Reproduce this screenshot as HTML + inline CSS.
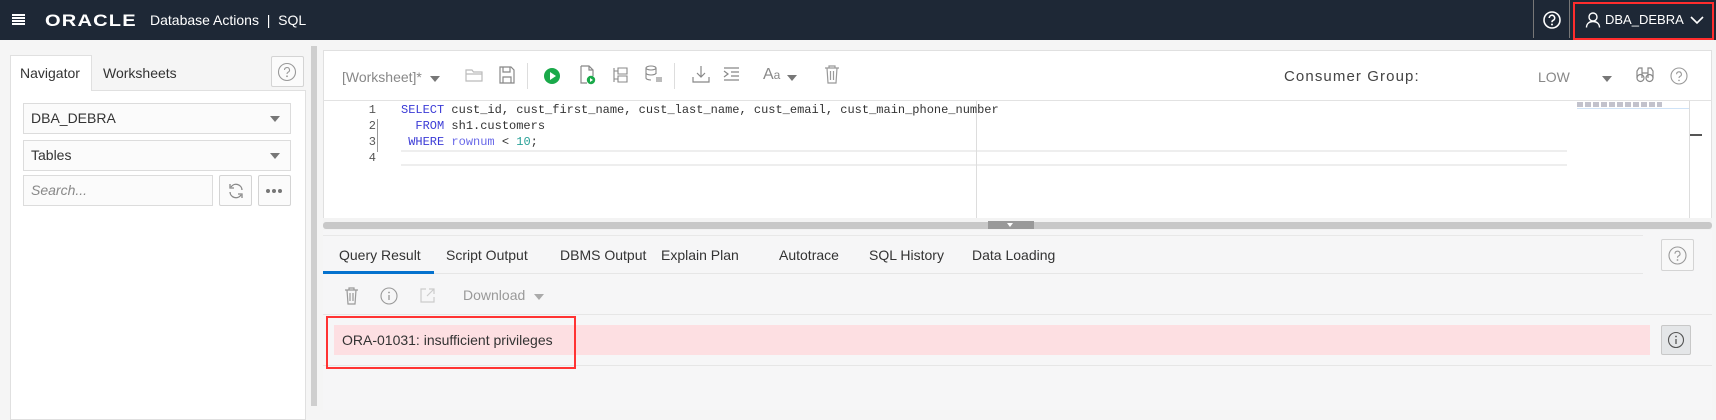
<!DOCTYPE html>
<html><head><meta charset="utf-8"><style>
*{box-sizing:border-box;margin:0;padding:0}
body{width:1716px;height:401px;overflow:hidden;background:#f5f5f5;font-family:"Liberation Sans",sans-serif;font-size:14px;color:#333;position:relative}
.a{position:absolute}
.hdr{left:0;top:0;width:1716px;height:40px;background:#1e2836;color:#fff}
.btn{position:absolute;border:1px solid #d4d4d4;background:#fbfbfb;border-radius:2px}
.sel{position:absolute;border:1px solid #dcdcdc;background:#fbfbfb;padding:0 0 0 7px;line-height:29px;font-size:14px;color:#333}
.caret{position:absolute;width:0;height:0;border-left:5px solid transparent;border-right:5px solid transparent;border-top:6px solid #777}
.code{font-family:"Liberation Mono",monospace;font-size:12px;white-space:pre;position:absolute;left:401px;line-height:16px;color:#333}
.ln{font-family:"Liberation Mono",monospace;font-size:12px;position:absolute;left:364px;color:#555;width:12px;text-align:right;line-height:16px}
.kw{color:#3b3bd6}.id{color:#6868e8}.nm{color:#2aa198}
.tab{position:absolute;top:247px;font-size:14px;color:#333}
</style></head><body>
<div class="a hdr">
 <div class="a" style="left:12px;top:14px;width:13px;height:1.5px;background:#fff;box-shadow:0 3px 0 #fff,0 6px 0 #fff,0 9px 0 #fff"></div>
 <div class="a" style="left:45px;top:11px;font-size:17px;font-weight:bold;letter-spacing:1px;transform:scaleX(1.18);transform-origin:left">ORACLE</div>
 <div class="a" style="left:150px;top:12px;font-size:14px">Database Actions &nbsp;| &nbsp;SQL</div>
 <div class="a" style="left:1533px;top:0;width:1px;height:38px;background:#777"></div>
 <svg class="a" style="left:1542px;top:10px" width="20" height="20"><circle cx="10" cy="10" r="8" fill="none" stroke="#fff" stroke-width="1.6"/><path d="M7.3 8a2.7 2.7 0 1 1 3.8 2.4c-.8.4-1.1.9-1.1 1.8" fill="none" stroke="#fff" stroke-width="1.6"/><circle cx="10" cy="14.5" r="1" fill="#fff"/></svg>
 <div class="a" style="left:1569px;top:0;width:1px;height:38px;background:#777"></div>
 <div class="a" style="left:1573px;top:2px;width:141px;height:38px;border:2px solid #ff2d2d"></div>
 <svg class="a" style="left:1585px;top:11px" width="16" height="18"><circle cx="8" cy="6" r="4" fill="none" stroke="#fff" stroke-width="1.4"/><path d="M1.5 16.5c0-4 3-6 6.5-6s6.5 2 6.5 6" fill="none" stroke="#fff" stroke-width="1.4"/></svg>
 <div class="a" style="left:1605px;top:12px;font-size:13px">DBA_DEBRA</div>
 <svg class="a" style="left:1690px;top:15px" width="14" height="10"><path d="M1 2l6 6 6-6" fill="none" stroke="#fff" stroke-width="1.6"/></svg>
</div>

<div class="a" style="left:10px;top:90px;width:296px;height:330px;background:#fff;border:1px solid #e0e0e0"></div>
<div class="a" style="left:10px;top:55px;width:82px;height:36px;background:#fff;border:1px solid #e0e0e0;border-bottom:none"></div>
<div class="a" style="left:20px;top:65px;font-size:14px">Navigator</div>
<div class="a" style="left:103px;top:65px;font-size:14px">Worksheets</div>
<div class="btn" style="left:271px;top:56px;width:33px;height:31px"></div>
<svg class="a" style="left:277px;top:62px" width="20" height="20"><circle cx="10" cy="10" r="8.5" fill="none" stroke="#999" stroke-width="1.1"/><path d="M7.5 8a2.5 2.5 0 1 1 3.5 2.3c-.7.4-1 .8-1 1.7" fill="none" stroke="#999" stroke-width="1.1"/><circle cx="10" cy="14.3" r=".9" fill="#999"/></svg>
<div class="sel" style="left:23px;top:103px;width:268px;height:31px">DBA_DEBRA</div><div class="caret" style="left:270px;top:116px"></div>
<div class="sel" style="left:23px;top:140px;width:268px;height:31px">Tables</div><div class="caret" style="left:270px;top:153px"></div>
<div class="sel" style="left:23px;top:175px;width:190px;height:31px;color:#888;font-style:italic">Search...</div>
<div class="btn" style="left:219px;top:175px;width:33px;height:31px"></div>
<svg class="a" style="left:227px;top:182px" width="18" height="18"><path d="M15 8A6 6 0 0 0 4 5M3 10a6 6 0 0 0 11 3" fill="none" stroke="#888" stroke-width="1.3"/><path d="M3 2v4h4M15 16v-4h-4" fill="none" stroke="#888" stroke-width="1.3"/></svg>
<div class="btn" style="left:258px;top:175px;width:33px;height:31px"></div>
<div class="a" style="left:266px;top:189px;width:4px;height:4px;border-radius:2px;background:#777;box-shadow:6px 0 0 #777,12px 0 0 #777"></div>
<div class="a" style="left:311px;top:46px;width:6px;height:360px;background:#cfcfcf"></div>

<div class="a" style="left:323px;top:50px;width:1389px;height:360px;background:#fff;border:1px solid #e0e0e0"></div>
<div class="a" style="left:323px;top:100px;width:1389px;height:1px;background:#e2e2e2"></div>
<div class="a" style="left:342px;top:69px;font-size:14px;color:#888">[Worksheet]*</div><div class="caret" style="left:430px;top:76px"></div>
<svg class="a" style="left:465px;top:67px" width="18" height="16"><path d="M1 3h6l1.5 2H17v9H1z M1 7h16" fill="none" stroke="#bbb" stroke-width="1.2"/></svg>
<svg class="a" style="left:499px;top:66px" width="16" height="18"><path d="M1 1h11l3 3v13H1z M4 1v5h7V1 M4 17v-6h8v6" fill="none" stroke="#888" stroke-width="1.2"/></svg>
<div class="a" style="left:527px;top:63px;width:1px;height:26px;background:#ddd"></div>
<svg class="a" style="left:543px;top:67px" width="18" height="18"><circle cx="9" cy="9" r="8" fill="#1aa94a"/><path d="M7 5l6 4-6 4z" fill="#fff"/></svg>
<svg class="a" style="left:580px;top:65px" width="16" height="20"><path d="M1 1h8l4 4v6 M1 1v17h6 M9 1v4h4" fill="none" stroke="#888" stroke-width="1.2"/><circle cx="11" cy="15" r="4.2" fill="#1aa94a"/><path d="M10 13l3 2-3 2z" fill="#fff"/></svg>
<svg class="a" style="left:612px;top:67px" width="16" height="16"><path d="M2 1v14 M2 4h4 M2 12h4 M6 1h9v6H6z M6 9h9v6H6z" fill="none" stroke="#888" stroke-width="1.1"/></svg>
<svg class="a" style="left:645px;top:65px" width="18" height="18"><ellipse cx="6" cy="3" rx="5" ry="2" fill="none" stroke="#888" stroke-width="1.1"/><path d="M1 3v10c0 1 2 2 5 2 M11 3v6 M1 8c0 1 2 2 5 2s5-1 5-2" fill="none" stroke="#888" stroke-width="1.1"/><rect x="11" y="12" width="6" height="5" fill="#bbb"/></svg>
<div class="a" style="left:674px;top:63px;width:1px;height:26px;background:#ddd"></div>
<svg class="a" style="left:692px;top:65px" width="18" height="18"><path d="M9 1v11 M5 8l4 4 4-4 M1 12v5h16v-5" fill="none" stroke="#888" stroke-width="1.2"/></svg>
<svg class="a" style="left:723px;top:67px" width="17" height="15"><path d="M1 1h15 M8 5h8 M8 9h8 M1 13h15 M1 4l4 3-4 3" fill="none" stroke="#888" stroke-width="1.2"/></svg>
<div class="a" style="left:763px;top:66px;font-size:16px;color:#888">A<span style="font-size:12px">a</span></div><div class="caret" style="left:787px;top:75px"></div>
<svg class="a" style="left:824px;top:64px" width="16" height="20"><path d="M1 4h14 M5 4V2h6v2 M3 4l1 15h8l1-15 M6.5 7v9 M9.5 7v9" fill="none" stroke="#999" stroke-width="1.2"/></svg>
<div class="a" style="left:1284px;top:68px;font-size:15px;letter-spacing:1.1px;color:#444">Consumer Group:</div>
<div class="a" style="left:1538px;top:69px;font-size:14px;color:#888">LOW</div><div class="caret" style="left:1602px;top:76px"></div>
<svg class="a" style="left:1636px;top:67px" width="18" height="16"><circle cx="4.5" cy="11" r="3.5" fill="none" stroke="#888" stroke-width="1.2"/><circle cx="13.5" cy="11" r="3.5" fill="none" stroke="#888" stroke-width="1.2"/><path d="M1 11V4l2-3h3v10 M17 11V4l-2-3h-3v10 M6 6h6" fill="none" stroke="#888" stroke-width="1.2"/></svg>
<svg class="a" style="left:1670px;top:67px" width="18" height="18"><circle cx="9" cy="9" r="8" fill="none" stroke="#999" stroke-width="1.1"/><path d="M6.6 7.2a2.4 2.4 0 1 1 3.4 2.2c-.7.4-1 .8-1 1.6" fill="none" stroke="#999" stroke-width="1.1"/><circle cx="9" cy="13.4" r=".8" fill="#999"/></svg>

<div class="a" style="left:377px;top:119px;width:1px;height:33px;background:#999"></div>
<div class="a" style="left:401px;top:150px;width:1166px;height:16px;border-top:2px solid #eee;border-bottom:2px solid #eee"></div>
<div class="a" style="left:976px;top:101px;width:1px;height:117px;background:#ddd"></div>
<div class="ln" style="top:102px">1</div><div class="ln" style="top:118px">2</div><div class="ln" style="top:134px">3</div><div class="ln" style="top:150px">4</div>
<div class="code" style="top:102px"><span class="kw">SELECT</span> cust_id, cust_first_name, cust_last_name, cust_email, cust_main_phone_number</div>
<div class="code" style="top:118px">  <span class="kw">FROM</span> sh1.customers</div>
<div class="code" style="top:134px"> <span class="kw">WHERE</span> <span class="id">rownum</span> &lt; <span class="nm">10</span>;</div>
<div class="a" style="left:1577px;top:102px;width:85px;height:5px;background:repeating-linear-gradient(90deg,#99a 0 6px,#fff 6px 8px);opacity:.6"></div>
<div class="a" style="left:1577px;top:108px;width:112px;height:1px;background:#cfe3f7"></div>
<div class="a" style="left:1689px;top:101px;width:1px;height:117px;background:#ddd"></div>
<div class="a" style="left:1690px;top:134px;width:12px;height:2px;background:#555"></div>
<div class="a" style="left:323px;top:218px;width:1389px;height:12px;background:#f3f3f3"></div>
<div class="a" style="left:323px;top:222px;width:1389px;height:7px;background:#c8c8c8;border-radius:3px"></div>
<div class="a" style="left:988px;top:221px;width:46px;height:8px;background:#999"></div>
<div class="a" style="left:1007px;top:223px;width:0;height:0;border-left:3px solid transparent;border-right:3px solid transparent;border-top:4px solid #fff"></div>

<div class="a" style="left:323px;top:230px;width:1389px;height:180px;background:#f6f6f7"></div>
<div class="a" style="left:323px;top:235px;width:1320px;height:1px;background:#e8e8e8"></div>
<div class="tab" style="left:339px">Query Result</div>
<div class="tab" style="left:446px">Script Output</div>
<div class="tab" style="left:560px">DBMS Output</div>
<div class="tab" style="left:661px">Explain Plan</div>
<div class="tab" style="left:779px">Autotrace</div>
<div class="tab" style="left:869px">SQL History</div>
<div class="tab" style="left:972px">Data Loading</div>
<div class="a" style="left:323px;top:273px;width:1320px;height:1px;background:#e6e6e6"></div>
<div class="a" style="left:323px;top:271px;width:111px;height:3px;background:#0572ce"></div>
<div class="btn" style="left:1661px;top:239px;width:33px;height:32px;background:#f8f8f8"></div>
<svg class="a" style="left:1668px;top:246px" width="19" height="19"><circle cx="9.5" cy="9.5" r="8.5" fill="none" stroke="#999" stroke-width="1.1"/><path d="M7 7.7a2.5 2.5 0 1 1 3.5 2.3c-.7.4-1 .8-1 1.7" fill="none" stroke="#999" stroke-width="1.1"/><circle cx="9.5" cy="14" r=".9" fill="#999"/></svg>
<svg class="a" style="left:344px;top:286px" width="15" height="19"><path d="M1 4h13 M5 4V2h5v2 M3 4l1 14h7l1-14 M6 7v8 M9 7v8" fill="none" stroke="#999" stroke-width="1.2"/></svg>
<svg class="a" style="left:380px;top:287px" width="18" height="18"><circle cx="9" cy="9" r="8" fill="none" stroke="#999" stroke-width="1.1"/><path d="M9 8v5" stroke="#999" stroke-width="1.3"/><circle cx="9" cy="5.5" r=".9" fill="#999"/></svg>
<svg class="a" style="left:419px;top:287px" width="17" height="17"><path d="M7 2H2v13h13v-5 M10 2h5v5 M15 2L8 9" fill="none" stroke="#ccc" stroke-width="1.2"/></svg>
<div class="a" style="left:463px;top:287px;font-size:14px;color:#999">Download</div><div class="caret" style="left:534px;top:294px;border-top-color:#aaa"></div>
<div class="a" style="left:323px;top:314px;width:1389px;height:1px;background:#e6e6e6"></div>
<div class="a" style="left:334px;top:325px;width:1316px;height:30px;background:#fddfe2"></div>
<div class="a" style="left:342px;top:332px;font-size:14px;color:#333">ORA-01031: insufficient privileges</div>
<div class="a" style="left:1661px;top:325px;width:30px;height:30px;background:#e4e6e8;border:1px solid #c8c8c8;border-radius:2px"></div>
<svg class="a" style="left:1667px;top:331px" width="18" height="18"><circle cx="9" cy="9" r="7.5" fill="none" stroke="#555" stroke-width="1.1"/><path d="M9 8v5" stroke="#555" stroke-width="1.3"/><circle cx="9" cy="5.5" r=".9" fill="#555"/></svg>
<div class="a" style="left:323px;top:365px;width:1389px;height:1px;background:#e6e6e6"></div>
<div class="a" style="left:326px;top:316px;width:250px;height:53px;border:2px solid #ff3333"></div>
</body></html>
